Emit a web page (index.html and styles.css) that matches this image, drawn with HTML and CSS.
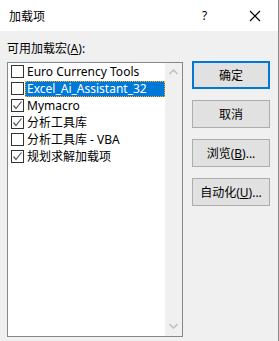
FILE: index.html
```html
<!DOCTYPE html>
<html>
<head>
<meta charset="utf-8">
<link rel="stylesheet" href="styles.css">
</head>
<body>
<div class="window">
  <div class="titlebar">
    <span class="title">加载项</span>
    <span class="help">?</span>
    <span class="close"><svg width="12" height="12" viewBox="0 0 12 12"><path d="M1 1L11 11M11 1L1 11" stroke="#000" stroke-width="1.1"/></svg></span>
  </div>
  <div class="content">
    <div class="label">可用加载宏(<u>A</u>):</div>
    <div class="main">
      <div class="listbox">
        <div class="items">
          <div class="row"><span class="cb"></span><span class="text">Euro Currency Tools</span></div>
          <div class="row"><span class="cb"></span><span class="text sel">Excel_Ai_Assistant_32</span></div>
          <div class="row"><span class="cb checked"><svg width="11" height="11" viewBox="0 0 11 11"><path d="M1.5 5.5L4 8.5L9.5 1.5" fill="none" stroke="#555" stroke-width="1.2"/></svg></span><span class="text">Mymacro</span></div>
          <div class="row"><span class="cb checked"><svg width="11" height="11" viewBox="0 0 11 11"><path d="M1.5 5.5L4 8.5L9.5 1.5" fill="none" stroke="#555" stroke-width="1.2"/></svg></span><span class="text">分析工具库</span></div>
          <div class="row"><span class="cb"></span><span class="text">分析工具库 - VBA</span></div>
          <div class="row"><span class="cb checked"><svg width="11" height="11" viewBox="0 0 11 11"><path d="M1.5 5.5L4 8.5L9.5 1.5" fill="none" stroke="#555" stroke-width="1.2"/></svg></span><span class="text">规划求解加载项</span></div>
        </div>
        <div class="scrollbar">
          <svg class="arrow" width="9" height="6" viewBox="0 0 9 6"><path d="M0.5 5L4.5 1L8.5 5" fill="none" stroke="#c2c2c2" stroke-width="1.6"/></svg>
          <svg class="arrow" width="9" height="6" viewBox="0 0 9 6"><path d="M0.5 1L4.5 5L8.5 1" fill="none" stroke="#c2c2c2" stroke-width="1.6"/></svg>
        </div>
      </div>
      <div class="buttons">
        <div class="btn default">确定</div>
        <div class="btn">取消</div>
        <div class="btn">浏览(<u>B</u>)...</div>
        <div class="btn">自动化(<u>U</u>)...</div>
      </div>
    </div>
  </div>
</div>
</body>
</html>
```
FILE: styles.css
```css
html, body {
  margin: 0;
  padding: 0;
}
body {
  width: 279px;
  height: 341px;
  overflow: hidden;
  font-family: "Noto Sans", "Noto Sans CJK SC", sans-serif;
  font-size: 12px;
  color: #000;
}
.window {
  width: 278px;
  height: 341px;
  border-right: 1px solid #8a8a8a;
  display: flex;
  flex-direction: column;
  background: #f0f0f0;
}
.titlebar {
  height: 31px;
  background: #fff;
  display: flex;
  align-items: center;
  padding-left: 9px;
  flex: none;
}
.title {
  font-size: 12px;
  flex: 1;
}
.help {
  font-size: 12px;
  width: 12px;
  margin-right: 35px;
}
.close {
  display: flex;
  width: 12px;
  margin-right: 17px;
}
.content {
  flex: 1;
  padding: 9px 0 0 7px;
  border-left: 1px solid #d4d4d4;
  margin-left: -1px;
}
.label {
  height: 17px;
  line-height: 17px;
  margin-bottom: 5px;
}
.main {
  display: flex;
  align-items: flex-start;
}
.listbox {
  width: 174px;
  height: 273px;
  border: 1px solid #828790;
  background: #fff;
  display: flex;
}
.items {
  flex: 1;
  padding-left: 3px;
}
.row {
  height: 17px;
  display: flex;
  align-items: center;
}
.cb {
  width: 11px;
  height: 11px;
  border: 1px solid #333;
  background: #fff;
  display: flex;
  flex: none;
}
.text {
  margin-left: 1px;
  padding-left: 2px;
  height: 17px;
  line-height: 17px;
  white-space: nowrap;
}
.text.sel {
  background: #0078d7;
  color: #fff;
  flex: 1;
  height: 16px;
  line-height: 16px;
  margin-top: 1px;
  outline: 1px dotted #ffb000;
  outline-offset: -1px;
}
.scrollbar {
  width: 17px;
  background: #f0f0f0;
  display: flex;
  flex-direction: column;
  align-items: center;
  justify-content: space-between;
  padding: 6px 0 7px;
}
.buttons {
  margin-left: 9px;
  margin-top: -1px;
  display: flex;
  flex-direction: column;
  gap: 11px;
}
.btn {
  width: 76px;
  height: 26px;
  border: 1px solid #adadad;
  background: #e1e1e1;
  display: flex;
  align-items: center;
  justify-content: center;
}
.btn.default {
  width: 74px;
  height: 24px;
  border: 2px solid #0078d7;
}
```
